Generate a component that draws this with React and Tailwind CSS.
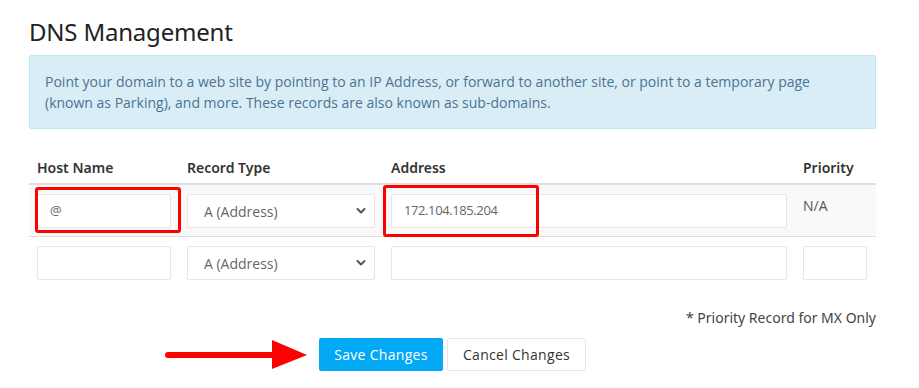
import React from "react";

function Chevron() {
  return (
    <svg width="10" height="7" viewBox="0 0 10 7" className="absolute right-[8px] top-1/2 -translate-y-1/2">
      <path d="M1.5 1.5 L5 5 L8.5 1.5" stroke="#555" strokeWidth="2" fill="none" strokeLinecap="round" strokeLinejoin="round" />
    </svg>
  );
}

function Select() {
  return (
    <div className="relative w-full h-[34px] bg-white border border-[#e6e6e6] rounded-[2px] flex items-center pl-[16px] text-[14px] text-[#666]">
      A (Address)
      <Chevron />
    </div>
  );
}

function Input({ value, className = "" }) {
  return (
    <div className={"h-[34px] bg-white border border-[#e6e6e6] rounded-[2px] flex items-center pl-[12px] text-[13px] text-[#666] " + className}>
      {value}
    </div>
  );
}

export default function App() {
  return (
    <div className="w-[919px] h-[388px] bg-white px-[29px] pt-[16px] text-[#333]" style={{ fontFamily: "'Open Sans', 'Liberation Sans', sans-serif" }}>
      <h1 className="text-[24px] leading-[32px] text-[#222] tracking-[-0.2px]" style={{ fontFamily: "'Noto Sans', 'Open Sans', sans-serif" }}>
        DNS Management
      </h1>
      <div className="mt-[7px] w-[847px] bg-[#d9edf7] border border-[#bce8f1] rounded-[2px] px-[15px] py-[15px] text-[14px] leading-[21px] text-[#4d7390]">
        Point your domain to a web site by pointing to an IP Address, or forward to another site, or point to a temporary page (known as Parking), and more. These records are also known as sub-domains.
      </div>

      <div className="mt-[22px] w-[847px]">
        <div className="flex h-[34px] items-center border-b-2 border-[#dddddd] text-[14px] font-semibold text-[#333]" style={{ fontFamily: "'Noto Sans', sans-serif" }}>
          <div className="w-[150px] pl-[8px]">Host Name</div>
          <div className="w-[204px] pl-[8px]">Record Type</div>
          <div className="w-[412px] pl-[8px]">Address</div>
          <div className="w-[81px] pl-[8px]">Priority</div>
        </div>

        <div className="flex h-[52px] bg-[#f9f9f9] border-b border-[#dddddd]">
          <div className="w-[150px] px-[8px] pt-[9px] relative">
            <Input value="@" />
            <div className="absolute left-[6px] top-[2px] w-[146px] h-[46px] border-[3px] border-[#ff0000] rounded-[3px]"></div>
          </div>
          <div className="w-[204px] px-[8px] pt-[9px]">
            <Select />
          </div>
          <div className="w-[412px] px-[8px] pt-[9px] relative">
            <Input value="172.104.185.204" className="pl-[12px] tracking-[-0.4px]" />
            <div className="absolute left-[0px] top-[0px] w-[156px] h-[52px] border-[3px] border-[#ff0000] rounded-[3px]"></div>
          </div>
          <div className="w-[81px] px-[8px] pt-[10px] text-[14px] text-[#555]">N/A</div>
        </div>

        <div className="flex h-[52px] border-b border-white">
          <div className="w-[150px] px-[8px] pt-[9px]">
            <Input value="" />
          </div>
          <div className="w-[204px] px-[8px] pt-[9px]">
            <Select />
          </div>
          <div className="w-[412px] px-[8px] pt-[9px]">
            <Input value="" />
          </div>
          <div className="w-[81px] px-[8px] pt-[9px]">
            <Input value="" className="w-[64px]" />
          </div>
        </div>

        <div className="mt-[18px] text-right text-[14px] text-[#444]" style={{ fontFamily: "'Noto Sans', sans-serif" }}>
          * Priority Record for MX Only
        </div>

        <div className="mt-[10px] flex justify-center items-center gap-[4px] relative">
          <svg width="145" height="32" viewBox="0 0 145 32" className="absolute left-[136px] top-[1px]">
            <line x1="3" y1="16" x2="112" y2="16" stroke="#ff0000" strokeWidth="6" strokeLinecap="round" />
            <polygon points="107,1 142,16 107,30" fill="#ff0000" />
          </svg>
          <div className="h-[33px] w-[124px] bg-[#03a9f4] rounded-[2px] text-white text-[14px] tracking-[0.3px] flex items-center justify-center">
            Save Changes
          </div>
          <div className="h-[33px] w-[139px] bg-white border border-[#e6e6e6] rounded-[2px] text-[#333] text-[14px] tracking-[0.3px] flex items-center justify-center">
            Cancel Changes
          </div>
        </div>
      </div>
    </div>
  );
}
